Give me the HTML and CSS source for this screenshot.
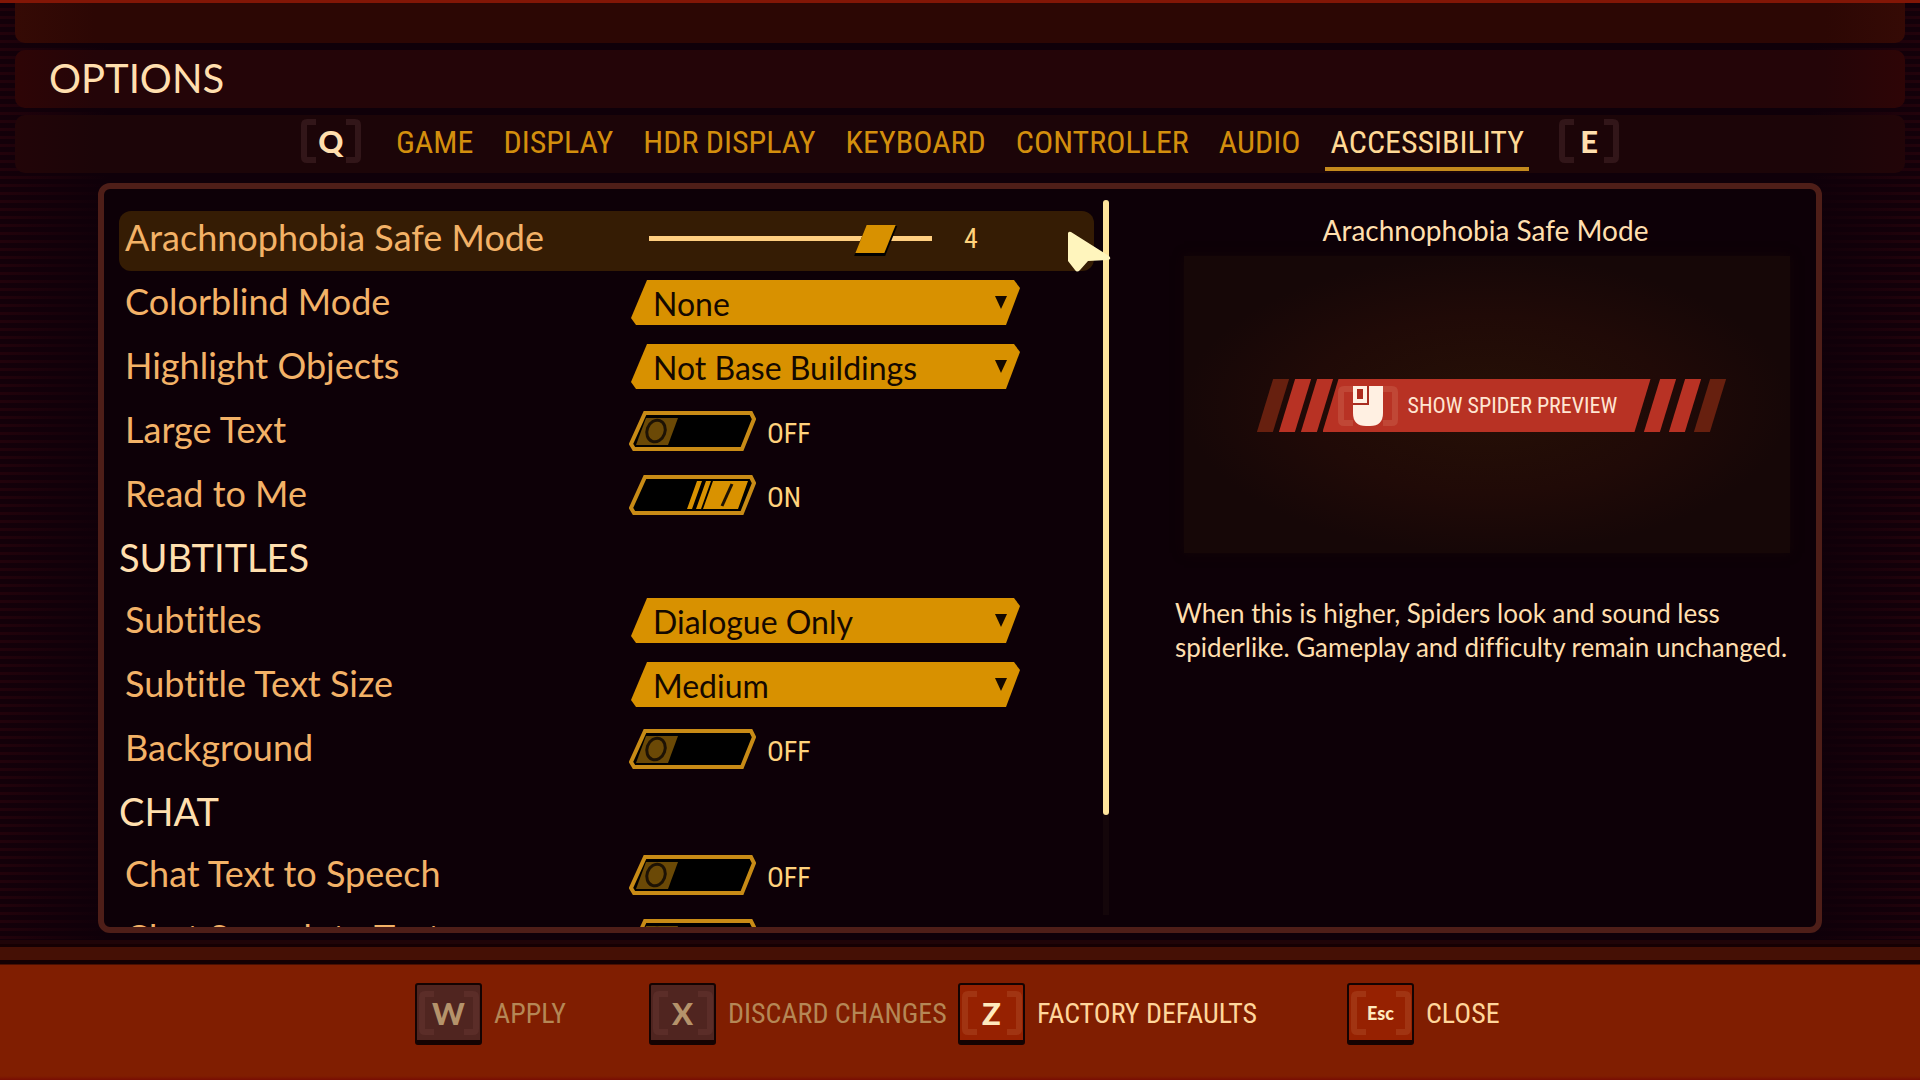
FILE: index.html
```html
<!DOCTYPE html>
<html lang="en">
  <head>
    <meta charset="UTF-8" />
    <meta name="viewport" content="width=device-width, initial-scale=1.0" />
    <title>Options</title>
    <link rel="stylesheet" href="styles.css">
  </head>
  <body>
    <svg class="sprite" width="0" height="0" aria-hidden="true">
      <symbol id="toggle-off" viewBox="0 0 127 40">
        <path d="M16 2H122L125 8L113 38H5L2 33Z" fill="#000" stroke="#c88b16" stroke-width="4" />
        <path d="M17 7H49L39 34H7Z" fill="#6b4906" />
        <ellipse cx="27" cy="20" rx="9" ry="11" transform="rotate(20 27 20)" fill="none" stroke="#1d1204" stroke-width="3" />
      </symbol>
      <symbol id="toggle-on" viewBox="0 0 127 40">
        <path d="M16 2H122L125 8L113 38H5L2 33Z" fill="#000" stroke="#c88b16" stroke-width="4" />
        <path d="M84 6H119L109 34H74ZM77 6H82L72 34H67ZM68 6H73L63 34H58Z" fill="#d99200" />
        <path d="M103 9L93 31" stroke="#1d1204" stroke-width="3" />
      </symbol>
      <symbol id="brackets" viewBox="0 0 60 44">
        <path d="M15 3H6Q3 3 3 6V38Q3 41 6 41H15M45 3H54Q57 3 57 6V38Q57 41 54 41H45" fill="none" stroke="currentColor" stroke-width="6" />
      </symbol>
    </svg>

    <header class="header">
      <div class="bar bar-top"></div>
      <div class="bar bar-title"><h1>OPTIONS</h1></div>
      <nav class="bar bar-tabs">
        <button class="key"><svg><use href="#brackets" /></svg><span>Q</span></button>
        <div class="tabs">
          <a class="tab" href="#">GAME</a>
          <a class="tab" href="#">DISPLAY</a>
          <a class="tab" href="#">HDR DISPLAY</a>
          <a class="tab" href="#">KEYBOARD</a>
          <a class="tab" href="#">CONTROLLER</a>
          <a class="tab" href="#">AUDIO</a>
          <a class="tab active" href="#">ACCESSIBILITY</a>
        </div>
        <button class="key"><svg><use href="#brackets" /></svg><span>E</span></button>
      </nav>
    </header>

    <main class="panel">
      <div class="settings">
        <div class="list">
          <div class="row selected">
            <label for="safeMode">Arachnophobia Safe Mode</label>
            <div class="control">
              <input type="range" class="slider" id="safeMode" min="0" max="5" value="4" />
              <output class="state" for="safeMode">4</output>
            </div>
          </div>
          <div class="row">
            <label for="colorblind">Colorblind Mode</label>
            <div class="select">
              <select id="colorblind"><option>None</option></select>
            </div>
          </div>
          <div class="row">
            <label for="highlight">Highlight Objects</label>
            <div class="select">
              <select id="highlight"><option>Not Base Buildings</option></select>
            </div>
          </div>
          <div class="row">
            <label for="largeText">Large Text</label>
            <div class="control toggle">
              <input type="checkbox" id="largeText" />
              <svg><use href="#toggle-off" /></svg>
              <span class="state">OFF</span>
            </div>
          </div>
          <div class="row">
            <label for="readToMe">Read to Me</label>
            <div class="control toggle">
              <input type="checkbox" id="readToMe" checked />
              <svg><use href="#toggle-on" /></svg>
              <span class="state">ON</span>
            </div>
          </div>

          <h2>SUBTITLES</h2>
          <div class="row">
            <label for="subtitles">Subtitles</label>
            <div class="select">
              <select id="subtitles"><option>Dialogue Only</option></select>
            </div>
          </div>
          <div class="row">
            <label for="subtitleSize">Subtitle Text Size</label>
            <div class="select">
              <select id="subtitleSize"><option>Medium</option></select>
            </div>
          </div>
          <div class="row">
            <label for="background">Background</label>
            <div class="control toggle">
              <input type="checkbox" id="background" />
              <svg><use href="#toggle-off" /></svg>
              <span class="state">OFF</span>
            </div>
          </div>

          <h2>CHAT</h2>
          <div class="row">
            <label for="textToSpeech">Chat Text to Speech</label>
            <div class="control toggle">
              <input type="checkbox" id="textToSpeech" />
              <svg><use href="#toggle-off" /></svg>
              <span class="state">OFF</span>
            </div>
          </div>
          <div class="row">
            <label for="speechToText">Chat Speech to Text</label>
            <div class="control toggle">
              <input type="checkbox" id="speechToText" />
              <svg><use href="#toggle-off" /></svg>
              <span class="state">OFF</span>
            </div>
          </div>
        </div>
        <div class="scrollbar"><div class="scroll-thumb"></div></div>
        <svg class="cursor" viewBox="0 0 46 44" aria-hidden="true">
          <path d="M2 3Q3 1 5 2L43 26Q46 29 42 30L22 31L14 40Q11 43 9 40L2 31Z" fill="#fff5bd" />
        </svg>
      </div>

      <aside class="details">
        <h3>Arachnophobia Safe Mode</h3>
        <div class="preview">
          <button class="preview-button">
            <i class="stripe faded"></i><i class="stripe"></i><i class="stripe"></i>
            <span class="preview-label">
              <svg class="mouse" viewBox="0 0 60 44">
                <path d="M15 5H6Q3 5 3 8V36Q3 39 6 39H15M45 5H54Q57 5 57 8V36Q57 39 54 39H45" fill="none" stroke="#c04736" stroke-width="6" />
                <path d="M15 2H45V29Q45 42 32 42H28Q15 42 15 29Z" fill="#fff0e2" />
                <path d="M15 20H30V2" fill="none" stroke="#a82d20" stroke-width="2" />
                <path d="M19 5H25V15H19Z" fill="#ad2a1c" />
              </svg>
              SHOW SPIDER PREVIEW
            </span>
            <i class="stripe wide"></i><i class="stripe wide"></i><i class="stripe faded wide"></i>
          </button>
        </div>
        <p>When this is higher, Spiders look and sound less spiderlike. Gameplay and difficulty remain unchanged.</p>
      </aside>
    </main>

    <footer class="footer">
      <button class="action" disabled>
        <span class="key cap"><svg><use href="#brackets" /></svg><span>W</span></span>
        APPLY
      </button>
      <button class="action" disabled>
        <span class="key cap"><svg><use href="#brackets" /></svg><span>X</span></span>
        DISCARD CHANGES
      </button>
      <button class="action">
        <span class="key cap"><svg><use href="#brackets" /></svg><span>Z</span></span>
        FACTORY DEFAULTS
      </button>
      <button class="action">
        <span class="key cap small"><svg><use href="#brackets" /></svg><span>Esc</span></span>
        CLOSE
      </button>
    </footer>
  </body>
</html>
```

FILE: styles.css
```css
* {
  box-sizing: border-box;
}
body {
  margin: 0;
  height: 100vh;
  display: flex;
  flex-direction: column;
  overflow: hidden;
  font-family: Lato, sans-serif;
  font-variant-ligatures: none;
  color: #ffdfae;
  background:
    linear-gradient(90deg, transparent, #0f0009 110px, #0f0009 calc(100% - 110px), transparent),
    repeating-linear-gradient(#22020b 0 3px, #130009 3px 8px);
}
h1,
h2,
h3,
p {
  margin: 0;
  font-weight: 400;
}
button {
  border: 0;
  padding: 0;
  background: none;
  font: inherit;
  color: inherit;
}
.sprite {
  position: absolute;
}

/* header */
.header {
  display: flex;
  flex-direction: column;
  gap: 7px;
  padding: 0 15px;
  border-top: 3px solid #821606;
}
.bar {
  display: flex;
  align-items: center;
  height: 58px;
  border-radius: 0 0 10px 10px;
}
.bar-top {
  height: 40px;
  background: linear-gradient(90deg, #350a05, #2c0704 80px, #2c0704 calc(100% - 80px), #350a05);
}
.bar-title {
  padding: 0 34px;
  border-radius: 10px;
  background: linear-gradient(90deg, #2e0506, #240508 80px, #240508 calc(100% - 80px), #2e0506);
}
.bar-title h1 {
  font-size: 40px;
  line-height: 56px;
  padding-bottom: 2px;
}
.bar-tabs {
  justify-content: center;
  gap: 30px;
  border-radius: 10px;
  background: linear-gradient(90deg, #220508, #1c0508 80px, #1c0508 calc(100% - 80px), #220508);
}
.bar-tabs .key {
  margin-bottom: 6px;
}
.tabs {
  display: flex;
  gap: 20px;
}
.tab {
  padding: 0 5px;
  font: 32px/50px "Roboto Condensed", "Liberation Sans Narrow", sans-serif;
  color: #d38f0d;
  text-decoration: none;
  border-bottom: 4px solid transparent;
}
.tab.active {
  color: #ffd995;
  border-color: #c48a1d;
}
.key {
  display: grid;
  place-items: center;
  width: 60px;
  height: 44px;
  font: 900 31px/44px Lato, sans-serif;
}
.key > * {
  grid-area: 1 / 1;
}
.key svg {
  width: 60px;
  height: 44px;
  color: #321619;
}

/* options panel */
.panel {
  flex: 1;
  min-height: 0;
  margin: 10px 98px 14px;
  display: grid;
  grid-template-columns: 63fr 44fr;
  overflow: hidden;
  border: 6px solid #4e1e18;
  border-radius: 12px;
  background: #0d0007;
}
.settings {
  position: relative;
  display: flex;
  gap: 9px;
  min-height: 0;
  padding: 11px 3px 12px 15px;
}
.list {
  flex: 1;
  display: flex;
  flex-direction: column;
  gap: 4px;
  padding-top: 11px;
}
.row {
  flex: none;
  display: grid;
  grid-template-columns: 504px 1fr;
  align-items: center;
  height: 60px;
  padding: 0 0 5px 6px;
  border-radius: 12px;
}
.row.selected {
  background: #351c04;
}
.row label {
  padding-bottom: 4px;
  font-size: 36px;
  line-height: 48px;
  color: #f3b267;
}
.list h2 {
  flex: none;
  height: 58px;
  font-size: 38px;
  line-height: 53px;
}
.control {
  display: flex;
  align-items: center;
}
.state {
  font: 28px/40px "Roboto Condensed", "Liberation Sans Narrow", sans-serif;
  color: #ffd27c;
}
.slider {
  appearance: none;
  width: 313px;
  height: 40px;
  margin: 0 17px 0 5px;
  background: linear-gradient(#ffce80, #ffce80) center / 283px 5px no-repeat;
}
.slider::-webkit-slider-thumb {
  appearance: none;
  width: 29px;
  height: 28px;
  background: #d89100;
  box-shadow: 1px 2px 0 1px #000;
  transform: skewX(-22deg);
}
.select {
  position: relative;
  width: 389px;
  margin-left: 2px;
}
.select select {
  appearance: none;
  display: block;
  width: 100%;
  height: 45px;
  padding: 2px 22px 0;
  border: 0;
  font: 32px/43px Lato, sans-serif;
  color: #140800;
  background: #d89100;
  clip-path: polygon(16px 0, calc(100% - 6px) 0, 100% 8px, calc(100% - 14px) 100%, 5px 100%, 0 38px);
}
.select::after {
  content: "";
  position: absolute;
  top: 16px;
  right: 13px;
  width: 12px;
  height: 13px;
  background: #140800;
  clip-path: polygon(0 0, 100% 0, 50% 100%);
}
.toggle {
  position: relative;
  gap: 11px;
}
.toggle input {
  position: absolute;
  left: 0;
  width: 127px;
  height: 40px;
  margin: 0;
  opacity: 0;
}
.toggle svg {
  width: 127px;
  height: 40px;
}
.toggle .state {
  padding-top: 6px;
}
.scrollbar {
  width: 6px;
  background: #14060a;
}
.scroll-thumb {
  height: 86%;
  border-radius: 3px;
  background: #ffe59c;
}
.cursor {
  position: absolute;
  top: 41px;
  right: 0;
  width: 46px;
  height: 44px;
}

/* details */
.details {
  display: flex;
  flex-direction: column;
  padding: 22px 26px 0 63px;
}
.details h3 {
  font-size: 28px;
  line-height: 38px;
  padding: 0 0 2px 6px;
  text-align: center;
}
.preview {
  display: grid;
  place-items: center;
  height: 297px;
  margin: 5px 0 43px 9px;
  background: radial-gradient(closest-side, #261006, #200a07 60%, #160707);
  box-shadow: 0 0 10px #140507;
}
.preview-button {
  display: flex;
  gap: 6px;
  height: 53px;
  margin: 2px 0 0 8px;
}
.stripe {
  width: 16px;
  background: #b83224;
  transform: skewX(-17deg);
}
.stripe.faded {
  background: #67200f;
}
.stripe.wide {
  margin-left: 3px;
}
.preview-label {
  display: flex;
  align-items: center;
  gap: 10px;
  width: 328px;
  margin: 0 -8px;
  padding-left: 15px;
  font: 22px/53px "Roboto Condensed", "Liberation Sans Narrow", sans-serif;
  color: #ffe6d3;
  white-space: nowrap;
  background: #b83224;
  clip-path: polygon(16px 0, 100% 0, calc(100% - 16px) 100%, 0 100%);
}
.mouse {
  width: 60px;
  height: 44px;
}
.details p {
  margin-right: -10px;
  font-size: 26px;
  line-height: 34px;
}

/* footer */
.footer {
  display: grid;
  grid-template-columns: 234px 309px 389px 158px;
  justify-content: center;
  align-items: start;
  height: 133px;
  padding-top: 23px;
  border-top: 13px solid #451005;
  background: linear-gradient(#140003 4px, #801e01 5px, #801e01 calc(100% - 4px), #780d03);
  box-shadow: 0 -3px 0 #150003, 0 -7px 0 #1f0408;
}
.action {
  display: flex;
  align-items: center;
  gap: 12px;
  font: 28px/60px "Roboto Condensed", "Liberation Sans Narrow", sans-serif;
  color: #ffd69b;
  white-space: nowrap;
}
.action:disabled {
  color: #b58756;
}
.cap {
  width: 67px;
  height: 62px;
  border: 2px solid #140302;
  border-bottom-width: 5px;
  border-radius: 3px;
  color: #ffe9bd;
  background: #962101;
}
.cap svg {
  color: #a13412;
}
.cap.small {
  font-size: 18px;
}
.action:disabled .cap {
  color: #b5936b;
  background: #502520;
}
.action:disabled .cap svg {
  color: #5b2d28;
}
```
